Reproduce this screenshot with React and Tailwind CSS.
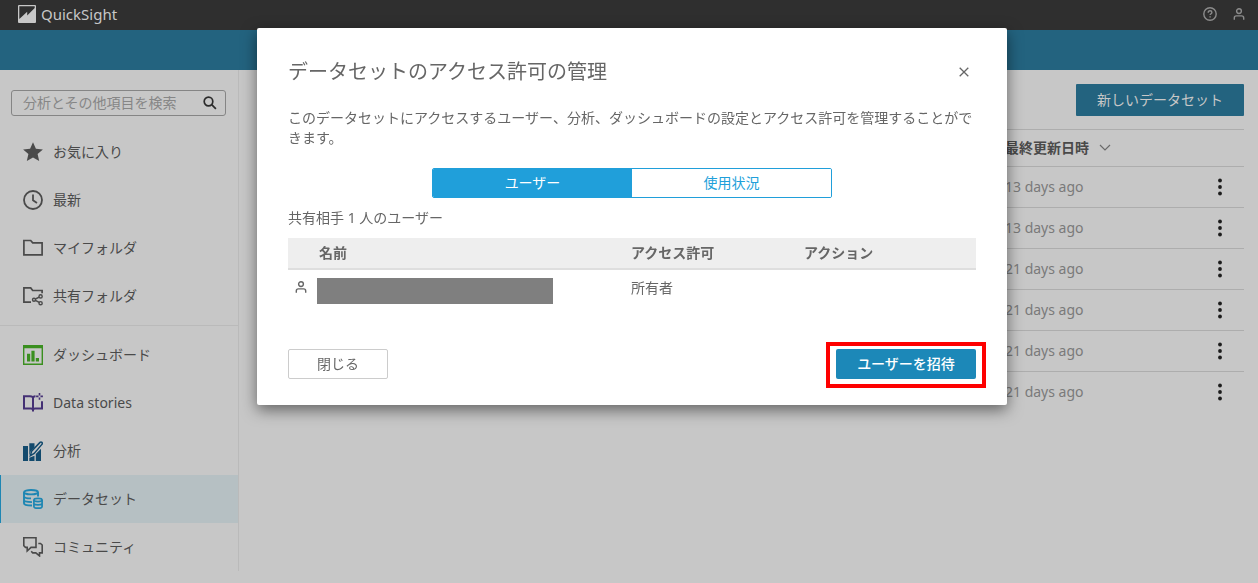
import { useState } from 'react';

const StarIcon = () => (
  <svg width="20" height="20" viewBox="0 0 20 20" fill="#4a4a4a">
    <path d="M10 0.3l2.9 6.4 7 .7-5.3 4.6 1.6 7L10 15.4 3.8 19l1.6-7L.1 7.4l7-.7z" />
  </svg>
);

const ClockIcon = () => (
  <svg width="20" height="20" viewBox="0 0 20 20" fill="none" stroke="#4a4a4a" strokeWidth="1.8">
    <circle cx="10" cy="10" r="9" />
    <path d="M10 4.5V10.3l4 2.6" />
  </svg>
);

const FolderIcon = () => (
  <svg width="20" height="20" viewBox="0 0 20 20" fill="none" stroke="#4a4a4a" strokeWidth="1.7">
    <path d="M.9 2.5h6.8l2 2.3h9.4v12H.9z" />
  </svg>
);

const SharedFolderIcon = () => (
  <svg width="20" height="20" viewBox="0 0 20 20" fill="none" stroke="#4a4a4a" strokeWidth="1.7">
    <path d="M8 16.1H.9V1.9h6.8l2 2.6h9.4v2.8" />
    <g strokeWidth="1.4">
      <circle cx="11" cy="13.7" r="1.5" />
      <circle cx="17.6" cy="10.4" r="1.6" />
      <circle cx="17.6" cy="17.2" r="1.6" />
      <path d="M12.4 13l3.8-1.9M12.4 14.4l3.8 2" />
    </g>
  </svg>
);

const DashboardIcon = () => (
  <svg width="20" height="20" viewBox="0 0 20 20" fill="#3a8f1f">
    <path fillRule="evenodd" d="M0 0h20v20H0zM1.4 3.2v15.4h17.2V3.2z" />
    <path d="M4 8.7h3.2V16.5H4zM8.4 5.8h3.2v10.7H8.4zM12.8 13h3.2v3.5h-3.2z" />
  </svg>
);

const StoriesIcon = () => (
  <svg width="20" height="20" viewBox="0 0 20 20" fill="none" stroke="#443074" strokeWidth="2">
    <path d="M12.5 3.300C11 3.300 10 4 10 5v13.500M10 5c0-1-1.200-1.800-3-1.800H1V15.500h7c1.200 0 2 .6 2 1.800 0-1.200.8-1.800 2-1.800h7V8.200" />
    <path d="M16.500 0v2.400M16.500 4.400v2.400M13.100 3.400h2.400M17.500 3.400h2.400" strokeWidth="1.600" />
  </svg>
);

const AnalysisIcon = () => (
  <svg width="20" height="20" viewBox="0 0 20 20">
    <path fill="#134a6d" d="M0 5h5v15H0zM6.3 2.3h5.2v4L7.6 10.600 6.300 15zM6.300 16.800l5.200-2V20H6.300zM12.800 13l5.200-5.300V20h-5.200z" />
    <path fill="#c7c7c7" stroke="#134a6d" strokeWidth="1.500" d="M7.400 14.600l1.200-4.400L17 1.400q1-.9 1.900 0t0 2L11.200 12.400z" />
  </svg>
);

const DatasetIcon = () => (
  <svg width="20" height="20" viewBox="0 0 20 20" fill="none" stroke="#1d86b3" strokeWidth="1.900">
    <ellipse cx="8" cy="3.200" rx="7" ry="2.200" />
    <path d="M1 3.200v11c0 1.600 3 2.300 8 2.300M15 3.200v4.300M1 7.200c0 1.500 3.200 2.200 7 2.200M1 11c0 1.500 3 2.100 8 2.100" />
    <ellipse cx="15" cy="11" rx="4.100" ry="1.600" strokeWidth="1.700" />
    <path
      d="M10.900 11v6.400c0 1 1.800 1.700 4.100 1.700s4.100-.7 4.100-1.700V11M10.900 14.200c0 1 1.800 1.600 4.100 1.600s4.100-.6 4.100-1.600"
      strokeWidth="1.700"
    />
  </svg>
);

const CommunityIcon = () => (
  <svg width="20" height="20" viewBox="0 0 20 20" fill="none" stroke="#4a4a4a" strokeWidth="1.600">
    <path d="M.8.8h12.200v9.600H8L4.200 14V10.400H2.500L.8 8.700z" />
    <path d="M15.300 6.500h2.200l1.700 1.500v7.900h-2.700v3L12.800 15.900H9.700L8.200 14.300" />
  </svg>
);

const UserIcon = ({ className }) => (
  <svg width="12" height="12" viewBox="0 0 12 12" fill="none" stroke="currentColor" strokeWidth="1.4" className={className}>
    <circle cx="6" cy="3.1" r="2.4" />
    <path d="M1.3 11.8V10c0-1.3.8-2.100 2.100-2.100h5.200c1.300 0 2.100.8 2.100 2.100v1.800" />
  </svg>
);

const primaryNav = [
  { label: 'お気に入り', Icon: StarIcon },
  { label: '最新', Icon: ClockIcon },
  { label: 'マイフォルダ', Icon: FolderIcon },
  { label: '共有フォルダ', Icon: SharedFolderIcon },
];

const secondaryNav = [
  { label: 'ダッシュボード', Icon: DashboardIcon },
  { label: 'Data stories', Icon: StoriesIcon },
  { label: '分析', Icon: AnalysisIcon },
  { label: 'データセット', Icon: DatasetIcon, active: true },
  { label: 'コミュニティ', Icon: CommunityIcon },
];

const datasets = ['13 days ago', '13 days ago', '21 days ago', '21 days ago', '21 days ago', '21 days ago'];

const NavList = ({ items }) => (
  <ul>
    {items.map(({ label, Icon, active }) => (
      <li key={label}>
        <a
          href="#"
          className={`flex h-12 items-center gap-[10px] border-l pl-[22px] ${
            active ? 'border-[#1d86b3] bg-[#b6c0c3]' : 'border-transparent'
          }`}
        >
          <Icon />
          {label}
        </a>
      </li>
    ))}
  </ul>
);

const TopBar = () => (
  <header>
    <div className="flex h-[30px] items-center justify-between bg-[#2f2f2f] pr-[13px] pb-[2px] pl-[18px] text-[#c7c7c7]">
      <a href="#" className="flex items-center gap-[5px] text-[15px] leading-5">
        <svg width="18" height="18" viewBox="0 0 18 18">
          <rect width="18" height="18" rx="1" fill="#c7c7c7" />
          <path d="M1.300 1.300h15.400v1.700L9.200 10.400V6.800L1.300 14z" fill="#2f2f2f" />
        </svg>
        QuickSight
      </a>
      <div className="flex items-center gap-4 text-[#8c8c8c]">
        <button aria-label="ヘルプ">
          <svg width="14" height="14" viewBox="0 0 14 14" fill="none" stroke="currentColor" strokeWidth="1.4" className="block">
            <circle cx="7" cy="7" r="6.2" />
            <path d="M5.200 5.700c0-1.200.8-1.900 1.900-1.900s1.800.7 1.800 1.600c0 1.300-1.800 1.300-1.800 2.700M7.100 9.200v1.400" />
          </svg>
        </button>
        <button aria-label="アカウント">
          <UserIcon className="block" />
        </button>
      </div>
    </div>
    <div className="h-10 bg-[#23637f]" />
  </header>
);

const Sidebar = () => (
  <nav className="w-[239px] shrink-0 border-r border-[#bababa] pt-5 text-[#4a4a4a]">
    <div className="mr-3 mb-3 ml-[11px] flex h-[26px] items-center rounded-[3px] border border-[#858585] pr-2 pl-[11px]">
      <input
        type="search"
        aria-label="分析とその他項目を検索"
        placeholder="分析とその他項目を検索"
        className="min-w-0 flex-1 bg-transparent outline-none placeholder:text-[#868686]"
      />
      <svg width="14" height="14" viewBox="0 0 14 14" fill="none" stroke="#2b2b2b" strokeWidth="1.7">
        <circle cx="5.5" cy="5.5" r="4.3" />
        <path d="M8.7 8.7l4.2 4.2" />
      </svg>
    </div>
    <NavList items={primaryNav} />
    <hr className="my-[5px] border-[#bababa]" />
    <NavList items={secondaryNav} />
  </nav>
);

const DatasetList = () => (
  <main className="min-w-0 flex-1 pt-[14px] pr-[14px] pl-5">
    <div className="flex justify-end">
      <button className="h-8 rounded-[1px] bg-[#23637f] px-[21px] text-[#c7c7c7]">新しいデータセット</button>
    </div>
    <table className="mt-[13px] w-full table-fixed border-collapse text-left">
      <thead>
        <tr className="h-[37px] border-t border-[#adadad] text-[#4a4a4a]">
          <td />
          <th className="w-[190px] font-bold">
            <button className="flex items-center gap-[10px]">
              最終更新日時
              <svg width="12" height="8" viewBox="0 0 12 8" fill="none" stroke="#6a6a6a" strokeWidth="1.2">
                <path d="M1 1l5 5 5-5" />
              </svg>
            </button>
          </th>
          <td className="w-[49px]" />
        </tr>
      </thead>
      <tbody>
        {datasets.map((updated, i) => (
          <tr key={i} className="h-[41px] border-t border-[#adadad] text-[#7a7a7a]">
            <td />
            <td>{updated}</td>
            <td>
              <button aria-label="メニュー" className="mx-auto block">
                <svg width="4" height="18" viewBox="0 0 4 18" fill="#1c1c1c" className="block">
                  <circle cx="2" cy="2.5" r="1.9" />
                  <circle cx="2" cy="9" r="1.9" />
                  <circle cx="2" cy="15.5" r="1.9" />
                </svg>
              </button>
            </td>
          </tr>
        ))}
      </tbody>
    </table>
  </main>
);

const tabs = ['ユーザー', '使用状況'];

const PermissionsDialog = ({ onClose }) => {
  const [tab, setTab] = useState(tabs[0]);

  return (
    <div className="fixed inset-0 flex items-start justify-center pt-7 pl-[6px]">
      <div
        role="dialog"
        aria-labelledby="dialog-title"
        className="w-full max-w-[750px] rounded-[2px] bg-white px-[31px] pt-[30px] pb-[26px] text-[#666] shadow-[0_5px_15px_rgba(0,0,0,0.5)]"
      >
        <div className="flex items-center justify-between">
          <h2 id="dialog-title" className="text-xl leading-7 font-normal">
            データセットのアクセス許可の管理
          </h2>
          <button aria-label="閉じる" onClick={onClose} className="p-[7px]">
            <svg width="10" height="10" viewBox="0 0 10 10" stroke="#666" strokeWidth="1.3" className="block">
              <path d="M.7.7l8.6 8.6M9.300.7L.7 9.300" />
            </svg>
          </button>
        </div>
        <p className="mt-[22px]">
          このデータセットにアクセスするユーザー、分析、ダッシュボードの設定とアクセス許可を管理することができます。
        </p>
        <div role="tablist" className="mx-auto mt-5 flex h-[30px] max-w-[400px] overflow-hidden rounded-[2px] border border-[#209fda]">
          {tabs.map((name) => (
            <button
              key={name}
              role="tab"
              aria-selected={tab === name}
              onClick={() => setTab(name)}
              className={`flex-1 ${tab === name ? 'bg-[#209fda] text-white' : 'bg-white text-[#209fda]'}`}
            >
              {name}
            </button>
          ))}
        </div>
        <p className="mt-[10px]">共有相手 1 人のユーザー</p>
        <table className="mt-[10px] w-full table-fixed border-collapse text-left">
          <thead>
            <tr className="h-[31px] border-b-2 border-[#dedede] bg-[#eee]">
              <td className="w-[29px]" />
              <th className="pl-[2px] font-bold">名前</th>
              <th className="w-[173px] font-bold">アクセス許可</th>
              <th className="w-[172px] font-bold">アクション</th>
            </tr>
          </thead>
          <tbody>
            <tr className="align-top">
              <td className="pt-[11px] pl-[7px]">
                <UserIcon />
              </td>
              <td className="pt-2">
                <div className="h-[26px] max-w-[236px] bg-[#7f7f7f]" />
              </td>
              <td className="pt-2">所有者</td>
              <td />
            </tr>
          </tbody>
        </table>
        <div className="mt-[45px] flex justify-between">
          <button onClick={onClose} className="h-[30px] w-[100px] rounded-[2px] border border-[#ccc]">
            閉じる
          </button>
          <div className="relative">
            <button className="h-[30px] w-[140px] rounded-[2px] bg-[#1c88b8] font-medium text-white">ユーザーを招待</button>
            <span className="pointer-events-none absolute -inset-x-[10px] -top-[7px] -bottom-[9px] border-4 border-[#fe0000]" />
          </div>
        </div>
      </div>
    </div>
  );
};

export default function App() {
  const [open, setOpen] = useState(true);

  return (
    <div className="min-h-screen bg-[#c7c7c7] font-['Noto_Sans','Noto_Sans_CJK_JP',sans-serif] text-sm leading-5">
      <TopBar />
      <div className="flex items-stretch">
        <Sidebar />
        <DatasetList />
      </div>
      {open && <PermissionsDialog onClose={() => setOpen(false)} />}
    </div>
  );
}
